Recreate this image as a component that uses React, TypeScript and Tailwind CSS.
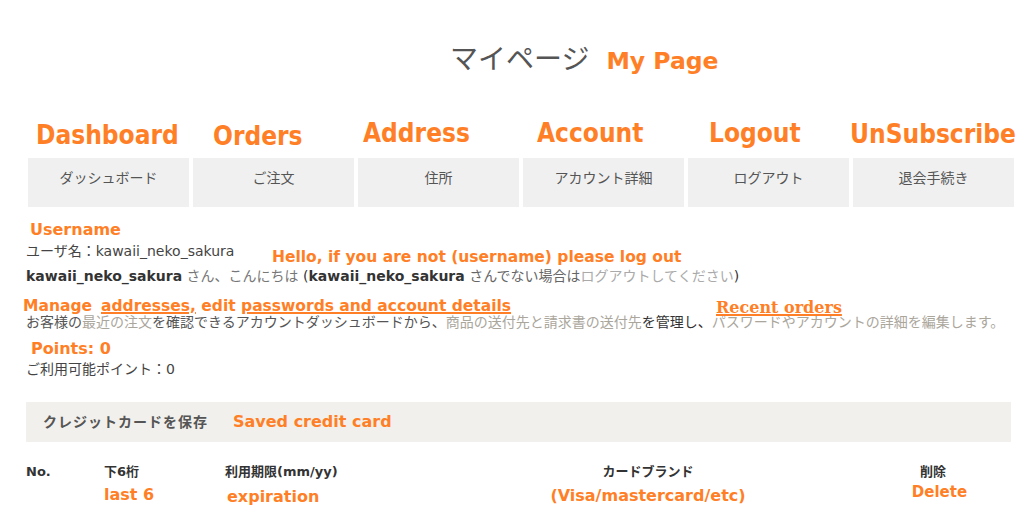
const tabs = [
  { ja: 'ダッシュボード', en: 'Dashboard', shift: 'ml-[8px] mt-0' },
  { ja: 'ご注文', en: 'Orders', shift: 'ml-[20px] mt-[1px]' },
  { ja: '住所', en: 'Address', shift: 'ml-[5px] mt-[-2px]' },
  { ja: 'アカウント詳細', en: 'Account', shift: 'ml-[14px] mt-[-2px]' },
  { ja: 'ログアウト', en: 'Logout', shift: 'ml-[21px] mt-[-2px]' },
  { ja: '退会手続き', en: 'UnSubscribe', shift: 'ml-[-3px] mt-[-1px]' },
];

export default function App() {
  return (
    <div className="relative h-[525px] w-[1028px] overflow-hidden bg-white font-['DejaVu_Sans','Noto_Sans_CJK_JP',sans-serif] text-[14px] text-[#444]">
      <div className="pl-[26px]">
        {/* Title */}
        <div className="box-border flex h-[120px] items-baseline pl-[424px] pt-[39px]">
          <h1 className="font-['Noto_Sans_CJK_JP',sans-serif] text-[28px] font-normal leading-[36px] text-[#555]">
            マイページ
          </h1>
          <span className="ml-[17px] text-[23.5px] font-bold leading-[36px] text-[#ff7f27]">My Page</span>
        </div>

        {/* English labels over the tabs */}
        <div className="ml-[2px] grid h-[38px] grid-cols-[repeat(6,161px)] gap-x-[4px]">
          {tabs.map((t) => (
            <div
              key={t.en}
              className={`h-[30px] origin-left scale-x-90 whitespace-nowrap text-[26px] font-bold leading-[30px] text-[#ff7f27] ${t.shift}`}
            >
              {t.en}
            </div>
          ))}
        </div>

        {/* Tabs */}
        <div className="ml-[2px] grid grid-cols-[repeat(6,161px)] gap-x-[4px]">
          {tabs.map((t) => (
            <div
              key={t.ja}
              className="box-border flex h-[49px] justify-center bg-[#f0f0f0] pt-[10px] text-[14px] leading-[20px] text-[#555]"
            >
              {t.ja}
            </div>
          ))}
        </div>

        {/* Account summary */}
        <div className="mt-[13px] h-[21px] pl-[4px] text-[16px] font-bold leading-[20px] text-[#ff7f27]">Username</div>
        <div className="flex h-[25px] items-start">
          <span className="w-[246px] leading-[20px]">ユーザ名：kawaii_neko_sakura</span>
          <span className="mt-[6px] whitespace-nowrap text-[15.5px] font-bold leading-[20px] text-[#ff7f27]">
            Hello, if you are not (username) please log out
          </span>
        </div>
        <div className="h-[30px] whitespace-nowrap leading-[20px] text-[#333]">
          <b>kawaii_neko_sakura</b>
          <span className="text-[#777]"> さん、こんにちは </span>(<b>kawaii_neko_sakura</b>
          <span className="text-[#666]"> さんでない場合は</span>
          <span className="text-[#aaa]">ログアウトしてください</span>)
        </div>

        <div className="ml-[-3px] h-[16px] whitespace-nowrap text-[15.5px] font-bold leading-[20px] text-[#ff7f27]">
          Manage
          <span className="ml-[9px] underline decoration-2 underline-offset-[1px]">addresses,</span> edit{' '}
          <span className="underline decoration-2 underline-offset-[1px]">passwords and account details</span>
        </div>
        <div className="h-[27px] whitespace-nowrap leading-[20px] text-[#555]">
          お客様の<span className="text-[#aaa69c]">最近の注文</span>を確認できるアカウントダッシュボードから、
          <span className="text-[#aaa69c]">商品の送付先と請求書の送付先</span>
          <span className="text-[#333]">を管理し、</span>
          <span className="text-[#aaa69c]">パスワードやアカウントの詳細を編集します。</span>
        </div>

        <div className="h-[20px] pl-[5px] text-[16px] font-bold leading-[20px] text-[#ff7f27]">Points: 0</div>
        <div className="h-[43px] leading-[20px]">ご利用可能ポイント：0</div>

        {/* Saved cards */}
        <div className="flex h-[40px] w-[985px] items-center bg-[#f1f0ec] pl-[17px]">
          <span className="w-[190px] text-[14px] font-bold leading-[20px] tracking-[1px] text-[#555]">
            クレジットカードを保存
          </span>
          <span className="text-[16px] font-bold leading-[20px] text-[#ff7f27]">Saved credit card</span>
        </div>

        <div className="mt-[20px] grid grid-cols-[78px_121px_225px_396px_174px] text-[13px] font-bold leading-[20px] text-[#333]">
          <div>No.</div>
          <div className="flex flex-col">
            <span>下6桁</span>
            <span className="mt-[3px] text-[16px] text-[#ff7f27]">last 6</span>
          </div>
          <div className="flex flex-col">
            <span>利用期限(mm/yy)</span>
            <span className="mt-[5px] pl-[2px] text-[16px] text-[#ff7f27]">expiration</span>
          </div>
          <div className="flex flex-col items-center">
            <span>カードブランド</span>
            <span className="mt-[4px] text-[16px] text-[#ff7f27]">(Visa/mastercard/etc)</span>
          </div>
          <div className="flex flex-col items-center">
            <span>削除</span>
            <span className="pl-[13px] text-[15px] text-[#ff7f27]">Delete</span>
          </div>
        </div>
      </div>

      {/* Annotation laid over the description line */}
      <span className="absolute left-[716px] top-[298px] font-['DejaVu_Serif',serif] text-[16px] font-bold leading-[20px] text-[#ff7f27] underline decoration-2 underline-offset-[1px]">
        Recent orders
      </span>
    </div>
  );
}
